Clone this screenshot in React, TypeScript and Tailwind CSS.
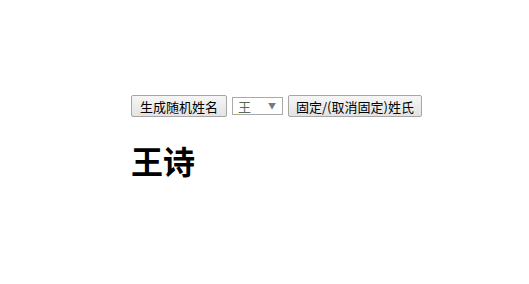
export default function App() {
  return (
    <div className="min-h-screen bg-white pl-[131px] pt-[95px] font-['Noto_Sans_CJK_SC',sans-serif] text-black">
      <div className="flex items-center gap-[5px]">
        <button className="h-[22px] rounded-[2px] border border-[#a6a6a6] bg-gradient-to-b from-[#f6f6f6] to-[#e3e3e3] px-[8px] text-[13px] leading-none">
          生成随机姓名
        </button>
        <div className="relative flex h-[18px] w-[51px] items-center border border-[#a9a9a9] bg-white pl-[5px] text-[13px] leading-none text-[#5b6b52]">
          王
          <span className="absolute right-[6px] top-[4px] text-[8px] leading-none text-[#7a7a7a]">▼</span>
        </div>
        <button className="h-[22px] rounded-[2px] border border-[#a6a6a6] bg-gradient-to-b from-[#f6f6f6] to-[#e3e3e3] px-[7px] text-[13px] leading-none">
          固定/(取消固定)姓氏
        </button>
      </div>
      <h1 className="mt-[23px] text-[32px] font-bold leading-[40px]">王诗</h1>
    </div>
  );
}
